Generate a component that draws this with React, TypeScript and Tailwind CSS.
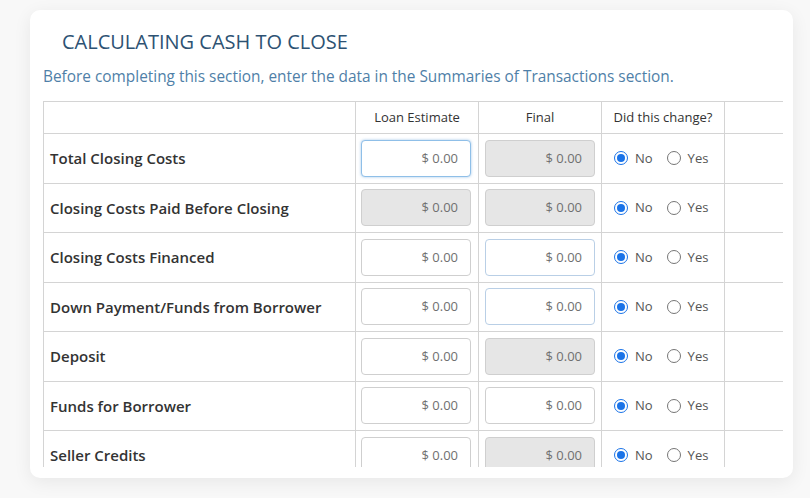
const rows: { label: string; le: "white" | "focus" | "gray"; fin: "white" | "blue" | "gray" }[] = [
  { label: "Total Closing Costs", le: "focus", fin: "gray" },
  { label: "Closing Costs Paid Before Closing", le: "gray", fin: "gray" },
  { label: "Closing Costs Financed", le: "white", fin: "blue" },
  { label: "Down Payment/Funds from Borrower", le: "white", fin: "blue" },
  { label: "Deposit", le: "white", fin: "gray" },
  { label: "Funds for Borrower", le: "white", fin: "white" },
  { label: "Seller Credits", le: "white", fin: "gray" },
]

function MoneyBox({ kind }: { kind: "white" | "focus" | "gray" | "blue" }) {
  const look =
    kind === "gray"
      ? "border-[#cfcfcf] bg-[#e6e6e6]"
      : kind === "focus"
        ? "border-[#8fbfe8] bg-white shadow-[0_0_3px_rgba(100,160,220,0.6)]"
        : kind === "blue"
          ? "border-[#b9cfe6] bg-white"
          : "border-[#cfcfcf] bg-white"
  return (
    <div className={`flex h-[37px] w-[110px] items-center justify-end rounded-[4px] border pr-[12px] text-[13px] text-[#707070] ${look}`}>
      $ 0.00
    </div>
  )
}

function Radio({ on }: { on?: boolean }) {
  return on ? (
    <span className="flex h-[14px] w-[14px] shrink-0 items-center justify-center rounded-full border-[1.5px] border-[#1a73e8] bg-white">
      <span className="h-[8px] w-[8px] rounded-full bg-[#1a73e8]" />
    </span>
  ) : (
    <span className="ml-[14px] block h-[14px] w-[14px] shrink-0 rounded-full border border-[#767676] bg-white" />
  )
}

export default function App() {
  return (
    <div className="h-[498px] w-[810px] bg-[#f8f8f8] pt-[10px] pl-[30px] font-['Open_Sans',sans-serif]">
      <div className="flex h-[468px] w-[763px] flex-col rounded-[10px] bg-white pl-[13px] shadow-[0_4px_18px_rgba(0,0,0,0.07)]">
        <h2 className="pt-[19px] pl-[19px] text-[20px] leading-[26px] text-[#2d5273]">
          CALCULATING CASH TO CLOSE
        </h2>
        <p className="mt-[12px] text-[15.4px] leading-[20px] text-[#4f7fa8]">
          Before completing this section, enter the data in the Summaries of Transactions section.
        </p>
        <div className="mt-[14px] h-[366px] overflow-hidden">
          <table className="w-[739px] table-fixed border-collapse text-[#333]">
            <colgroup>
              <col className="w-[312px]" />
              <col className="w-[123px]" />
              <col className="w-[123px]" />
              <col className="w-[123px]" />
              <col className="w-[58px]" />
            </colgroup>
            <thead>
              <tr className="h-[32px] text-[13px] text-[#333]">
                <th className="border border-[#d4d4d4] font-normal" />
                <th className="border border-[#d4d4d4] font-normal">Loan Estimate</th>
                <th className="border border-[#d4d4d4] font-normal">Final</th>
                <th className="border border-[#d4d4d4] font-normal">Did this change?</th>
                <th className="border-y border-[#d4d4d4]" />
              </tr>
            </thead>
            <tbody>
              {rows.map((r) => (
                <tr key={r.label} className="h-[49.5px]">
                  <td className="border border-[#d4d4d4] pl-[6px] text-[15px] font-semibold text-[#333]">{r.label}</td>
                  <td className="border border-[#d4d4d4] pl-[5px]">
                    <MoneyBox kind={r.le} />
                  </td>
                  <td className="border border-[#d4d4d4] pl-[6px]">
                    <MoneyBox kind={r.fin} />
                  </td>
                  <td className="border border-[#d4d4d4] pl-[12px]">
                    <div className="flex items-center text-[13px] text-[#555]">
                      <Radio on />
                      <span className="ml-[7px]">No</span>
                      <Radio />
                      <span className="ml-[7px]">Yes</span>
                    </div>
                  </td>
                  <td className="border-y border-[#d4d4d4]" />
                </tr>
              ))}
            </tbody>
          </table>
        </div>
      </div>
    </div>
  )
}
